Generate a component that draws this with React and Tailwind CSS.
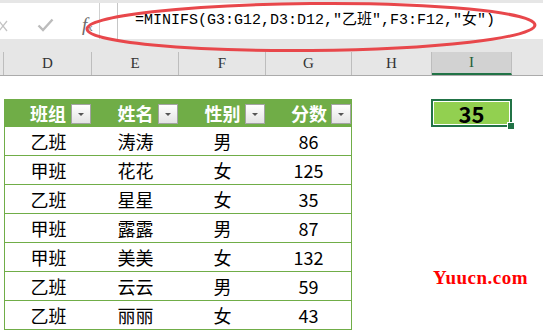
import React from "react"

var cols = [
  { name: "D", w: "w-[88px]" },
  { name: "E", w: "w-[87px]" },
  { name: "F", w: "w-[87px]" },
  { name: "G", w: "w-[86px]" },
  { name: "H", w: "w-[80px]" },
  { name: "I", w: "w-[80px]", active: true },
]

var rows = [
  ["乙班", "涛涛", "男", "86"],
  ["甲班", "花花", "女", "125"],
  ["乙班", "星星", "女", "35"],
  ["甲班", "露露", "男", "87"],
  ["甲班", "美美", "女", "132"],
  ["乙班", "云云", "男", "59"],
  ["乙班", "丽丽", "女", "43"],
]

var heads = ["班组", "姓名", "性别", "分数"]

function FilterButton() {
  return (
    <div className="absolute right-[1px] top-[5px] w-[20px] h-[20px] border border-[#a3a3a3] bg-gradient-to-b from-white to-[#e4e4e4] flex items-center justify-center">
      <div className="w-0 h-0 border-l-[3px] border-r-[3px] border-t-[3px] border-l-transparent border-r-transparent border-t-[#555]"></div>
    </div>
  )
}

export default function App() {
  return (
    <div className="w-[543px] h-[330px] relative overflow-hidden bg-white font-['Noto_Sans_CJK_SC',sans-serif]">
      {/* formula bar */}
      <div className="h-[39px] bg-[#e6e6e6] pt-[3px] flex">
        <div className="w-[100px] h-[36px] bg-white border-r border-[#d0d0d0] flex items-center relative">
          <svg width="10" height="12" viewBox="0 0 10 12" className="absolute left-[-2px] top-[17px]">
            <path d="M1 1 L9 11 M9 1 L1 11" stroke="#c4c4c4" strokeWidth="1.3" fill="none" />
          </svg>
          <svg width="17" height="14" viewBox="0 0 17 14" className="absolute left-[37px] top-[15px]">
            <path d="M1.5 7.5 L6 12 L15.5 1.5" stroke="#bcbcbc" strokeWidth="2.4" fill="none" />
          </svg>
          <span className="absolute left-[82px] top-[8px] italic text-[19px] text-[#6b6b6b] font-['Liberation_Serif',serif]">
            f<span className="text-[11px] not-italic">x</span>
          </span>
        </div>
        <div className="w-[17px] h-[36px] bg-white"></div>
        <div className="flex-1 h-[36px] bg-white border-l border-[#c6c6c6] flex items-center pl-[17px]">
          <span className="text-[15px] text-black whitespace-nowrap font-['Liberation_Mono','Noto_Sans_CJK_SC',monospace]">
            =MINIFS(G3:G12,D3:D12,"乙班",F3:F12,"女")
          </span>
        </div>
      </div>
      <div className="h-[13px] bg-[#e6e6e6]"></div>

      {/* column headers */}
      <div className="h-[24px] flex bg-[#e6e6e6] border-b border-[#ababab]">
        <div className="w-[4px] border-r border-[#bdbdbd]"></div>
        {cols.map(function (c) {
          return (
            <div
              key={c.name}
              className={
                c.active
                  ? c.w + " h-full bg-[#d2d2d2] border-r border-[#bdbdbd] border-b-2 border-b-[#217346] flex items-center justify-center text-[15px] text-[#1f5f3a] font-['Liberation_Serif',serif]"
                  : c.w + " h-full border-r border-[#bdbdbd] flex items-center justify-center text-[15px] text-[#333] font-['Liberation_Serif',serif]"
              }
            >
              {c.name}
            </div>
          )
        })}
        <div className="flex-1"></div>
      </div>

      <div className="h-[23px]"></div>

      {/* sheet */}
      <div className="grid grid-cols-[4px_88px_87px_87px_86px_80px_80px_1fr] grid-rows-[28px_repeat(7,29px)]">
        <div></div>
        {heads.map(function (h) {
          return (
            <div key={h} className="relative bg-[#70ad47] flex items-center justify-center text-white font-bold text-[18px]">
              {h}
              <FilterButton />
            </div>
          )
        })}
        <div></div>
        <div className="relative -ml-px border-2 border-[#217346]">
          <div className="h-full border border-white bg-[#92d050] flex items-center justify-center font-bold text-[22px] text-black">
            35
          </div>
          <div className="absolute right-[-5px] bottom-[-5px] w-[8px] h-[8px] bg-[#217346] border border-white"></div>
        </div>
        <div></div>

        {rows.map(function (r, i) {
          return (
            <React.Fragment key={i}>
              <div></div>
              {r.map(function (v, j) {
                var cls = "flex items-center justify-center text-[18px] text-black border-b border-[#70ad47]"
                if (j === 0) cls += " border-l"
                if (j === 3) cls += " border-r"
                return (
                  <div key={j} className={cls}>
                    {v}
                  </div>
                )
              })}
              <div></div>
              <div></div>
              <div></div>
            </React.Fragment>
          )
        })}
      </div>

      {/* annotation ellipse */}
      <svg width="543" height="60" className="absolute left-0 top-0 pointer-events-none">
        <ellipse cx="311" cy="27" rx="224" ry="23.5" fill="none" stroke="#e8474b" strokeWidth="3" transform="rotate(-0.5 311 27)" />
      </svg>

      {/* watermark */}
      <div className="absolute left-[433px] top-[264px] text-[19px] font-bold tracking-[0.5px] text-[#ff0000] font-['Liberation_Serif',serif]">
        Yuucn.com
      </div>
    </div>
  )
}
